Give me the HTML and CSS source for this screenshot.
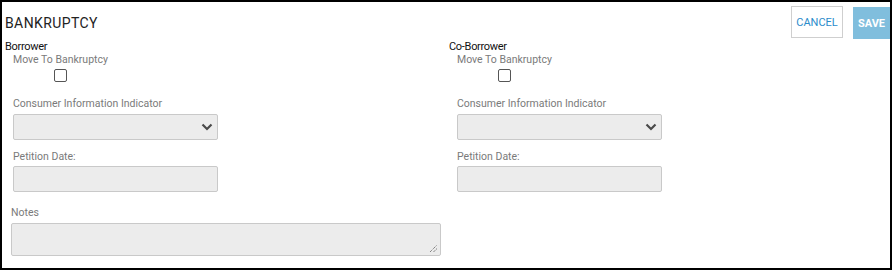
FILE: index.html
```html
<html>
  <head>
    <link rel="stylesheet" href="styles.css">
  </head>
  <body>
    <div class="panel">
      <div class="panel-header">
        <div class="panel-title">BANKRUPTCY</div>
        <div class="actions">
          <button class="btn-cancel">CANCEL</button>
          <button class="btn-save">SAVE</button>
        </div>
      </div>

      <div class="columns">
        <div class="column">
          <div class="party">Borrower</div>
          <div class="check-field">
            <label>Move To Bankruptcy</label>
            <span class="checkbox"></span>
          </div>
          <div class="field">
            <label>Consumer Information Indicator</label>
            <div class="select">
              <svg width="12" height="8" viewBox="0 0 12 8"><path d="M1.5 1.5 L6 6 L10.5 1.5" fill="none" stroke="#4a4a4a" stroke-width="2.2"/></svg>
            </div>
          </div>
          <div class="field">
            <label>Petition Date:</label>
            <div class="input"></div>
          </div>
        </div>

        <div class="column">
          <div class="party">Co-Borrower</div>
          <div class="check-field">
            <label>Move To Bankruptcy</label>
            <span class="checkbox"></span>
          </div>
          <div class="field">
            <label>Consumer Information Indicator</label>
            <div class="select">
              <svg width="12" height="8" viewBox="0 0 12 8"><path d="M1.5 1.5 L6 6 L10.5 1.5" fill="none" stroke="#4a4a4a" stroke-width="2.2"/></svg>
            </div>
          </div>
          <div class="field">
            <label>Petition Date:</label>
            <div class="input"></div>
          </div>
        </div>
      </div>

      <div class="notes">
        <label>Notes</label>
        <div class="textarea">
          <svg width="9" height="9" viewBox="0 0 9 9"><path d="M1 8 L8 1 M4.5 8 L8 4.5" stroke="#555" stroke-width="1" stroke-dasharray="1 1"/></svg>
        </div>
      </div>
    </div>
  </body>
</html>
```

FILE: styles.css
```css
body {
  margin: 0;
  font-family: Roboto, "Liberation Sans", sans-serif;
  background: #fff;
}

.panel {
  width: 892px;
  height: 270px;
  box-sizing: border-box;
  border: 2px solid #000;
}

.panel-header {
  display: flex;
  justify-content: space-between;
  height: 38px;
}

.panel-title {
  margin-top: 12.5px;
  margin-left: 3px;
  font-size: 14px;
  line-height: 16px;
  letter-spacing: 0.4px;
  color: #222;
}

.actions {
  display: flex;
  align-items: flex-start;
  gap: 10px;
  margin-top: 4px;
}

.actions button {
  font-family: Roboto, "Liberation Sans", sans-serif;
  font-size: 11px;
  border-radius: 0;
  cursor: pointer;
}

.btn-cancel {
  width: 52px;
  height: 32px;
  background: #fff;
  border: 1px solid #cfcfcf;
  color: #2b8ccb;
  padding: 0;
}

.btn-save {
  width: 37px;
  height: 32px;
  margin-top: 1px;
  background: #80bedd;
  border: 0;
  color: #fff;
  font-weight: bold;
  padding: 0;
}

.columns {
  display: grid;
  grid-template-columns: 444px 444px;
}

.column {
  padding-left: 3px;
}

.party {
  font-size: 11px;
  line-height: 13px;
  color: #111;
  letter-spacing: -0.3px;
}

label {
  display: block;
  font-size: 10.5px;
  line-height: 13px;
  color: #7a7a7a;
}

.check-field {
  display: inline-flex;
  flex-direction: column;
  align-items: center;
  margin-left: 8px;
}

.checkbox {
  display: block;
  width: 11px;
  height: 11px;
  margin-top: 3px;
  border: 1px solid #555;
  border-radius: 2px;
  background: #fff;
}

.field {
  margin-left: 8px;
}

.field label {
  margin-top: 15px;
  margin-bottom: 4px;
}

.field + .field label {
  margin-top: 10px;
  margin-bottom: 3px;
}

.select, .input {
  width: 203px;
  height: 24px;
  background: #ececec;
  border: 1px solid #c9c9c9;
  border-radius: 2px;
}

.select {
  display: flex;
  align-items: center;
  justify-content: flex-end;
  padding-right: 4px;
  box-sizing: content-box;
  width: 199px;
}

.notes {
  margin-left: 9px;
}

.notes label {
  margin-top: 14px;
  margin-bottom: 4px;
}

.textarea {
  width: 426px;
  height: 29px;
  padding: 0 2px 2px 0;
  background: #ececec;
  border: 1px solid #c9c9c9;
  border-radius: 2px;
  display: flex;
  align-items: flex-end;
  justify-content: flex-end;
}
```
